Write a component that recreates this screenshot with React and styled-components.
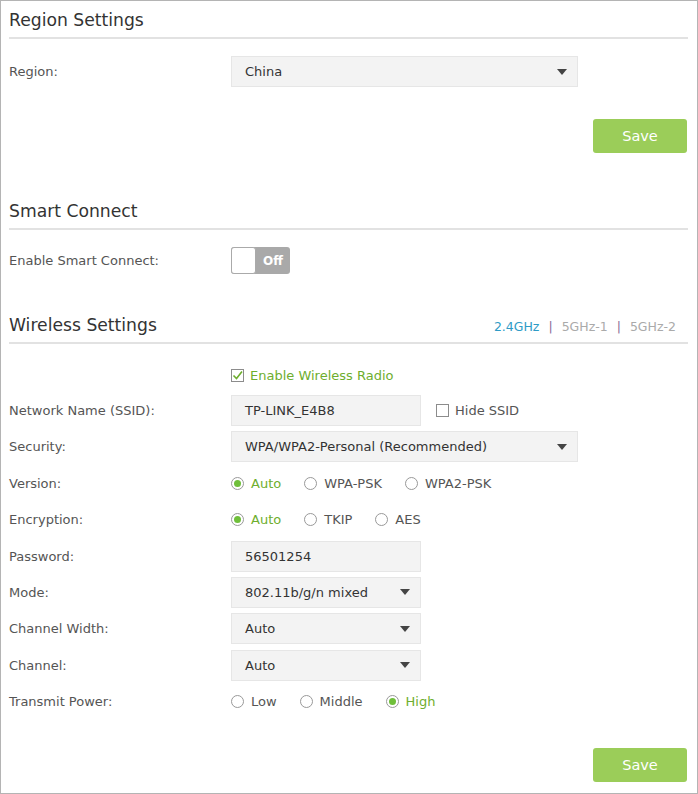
import React from 'react';
import styled, { createGlobalStyle, css } from 'styled-components';

const GlobalStyle = createGlobalStyle`
  html, body {
    margin: 0;
    padding: 0;
    background: #fff;
  }
  * {
    box-sizing: border-box;
  }
`;

const Frame = styled.div`
  width: 698px;
  height: 794px;
  border: 1px solid #b4b4b4;
  padding: 0 9px 0 8px;
  font-family: "DejaVu Sans", Verdana, sans-serif;
  font-size: 13px;
  color: #555;
  overflow: hidden;
`;

const Header = styled.div`
  display: flex;
  justify-content: space-between;
  align-items: center;
  height: 38px;
  padding-top: 2px;
  border-bottom: 2px solid #e2e2e2;
  margin-top: ${({ top }) => top || 0}px;
`;

const Title = styled.h2`
  margin: 0;
  font-size: 17.2px;
  font-weight: normal;
  color: #333;
  line-height: 34px;
`;

const Tabs = styled.div`
  display: flex;
  align-items: center;
  font-size: 12.5px;
  padding-right: 12px;
  margin-top: 2px;
`;

const Tab = styled.span`
  color: ${({ active }) => (active ? '#2e9bc6' : '#aaa')};
`;

const Sep = styled.span`
  color: #8a6a96;
  margin: 0 9px;
`;

const Row = styled.div`
  display: flex;
  align-items: center;
  height: ${({ h }) => h || 31}px;
  margin-top: ${({ top }) => (top === undefined ? 5.4 : top)}px;
`;

const Label = styled.div`
  width: 222px;
  flex-shrink: 0;
  color: #555;
`;

const fieldBox = css`
  height: 31px;
  background: #f3f3f3;
  border: 1px solid #e6e6e6;
  color: #333;
  display: flex;
  align-items: center;
  padding: 0 13px 0 13px;
`;

const Input = styled.div`
  ${fieldBox};
  width: ${({ w }) => w}px;
`;

const Select = styled.div`
  ${fieldBox};
  width: ${({ w }) => w}px;
  justify-content: space-between;
  padding-right: 10px;
`;

const Arrow = styled.span`
  width: 0;
  height: 0;
  border-left: 5px solid transparent;
  border-right: 5px solid transparent;
  border-top: 6px solid #444;
`;

const Actions = styled.div`
  display: flex;
  justify-content: flex-end;
  margin-top: ${({ top }) => top}px;
`;

const SaveButton = styled.button`
  width: 94px;
  height: 34px;
  border: none;
  border-radius: 3px;
  background: #9bcd59;
  color: #fff;
  font-family: "DejaVu Sans", Verdana, sans-serif;
  font-size: 14.5px;
  margin-right: 1px;
`;

const Toggle = styled.div`
  width: 59px;
  height: 27px;
  border-radius: 3px;
  background: #a9a9a9;
  display: flex;
  align-items: center;
`;

const Knob = styled.span`
  width: 25px;
  height: 27px;
  background: #fff;
  border: 1px solid #aaa;
  border-radius: 3px;
`;

const ToggleText = styled.span`
  flex: 1;
  text-align: center;
  color: #fff;
  font-weight: bold;
  font-size: 12px;
`;

const CheckItem = styled.label`
  display: flex;
  align-items: center;
  color: ${({ green }) => (green ? '#6eae2e' : '#555')};
  margin-left: ${({ left }) => left || 0}px;
`;

const Box = styled.span`
  width: 13px;
  height: 13px;
  border: 1px solid #8c8c8c;
  background: #fff;
  margin-right: 6px;
  display: flex;
  align-items: center;
  justify-content: center;
`;

const RadioItem = styled.label`
  display: flex;
  align-items: center;
  margin-right: 23px;
  color: ${({ checked }) => (checked ? '#6eae2e' : '#555')};
`;

const Circle = styled.span`
  width: 13px;
  height: 13px;
  border-radius: 50%;
  border: 1px solid #999;
  background: #fff;
  margin-right: 7px;
  display: flex;
  align-items: center;
  justify-content: center;
`;

const Dot = styled.span`
  width: 7px;
  height: 7px;
  border-radius: 50%;
  background: #6fbf3a;
`;

const Check = () => (
  <svg width="11" height="11" viewBox="0 0 11 11">
    <path d="M1.5 5.5 L4.5 8.5 L10 1.5" fill="none" stroke="#6eae2e" strokeWidth="1.6" />
  </svg>
);

const Radios = ({ items, value }) => (
  <>
    {items.map((item) => (
      <RadioItem key={item} checked={item === value}>
        <Circle>{item === value && <Dot />}</Circle>
        {item}
      </RadioItem>
    ))}
  </>
);

const App = () => {
  return (
    <Frame>
      <GlobalStyle />

      <Header>
        <Title>Region Settings</Title>
      </Header>
      <Row top={17}>
        <Label>Region:</Label>
        <Select w={347}>
          China
          <Arrow />
        </Select>
      </Row>
      <Actions top={32}>
        <SaveButton>Save</SaveButton>
      </Actions>

      <Header top={39}>
        <Title>Smart Connect</Title>
      </Header>
      <Row top={17} h={27}>
        <Label>Enable Smart Connect:</Label>
        <Toggle>
          <Knob />
          <ToggleText>Off</ToggleText>
        </Toggle>
      </Row>

      <Header top={32}>
        <Title>Wireless Settings</Title>
        <Tabs>
          <Tab active>2.4GHz</Tab>
          <Sep>|</Sep>
          <Tab>5GHz-1</Tab>
          <Sep>|</Sep>
          <Tab>5GHz-2</Tab>
        </Tabs>
      </Header>
      <Row top={21} h={20}>
        <Label />
        <CheckItem green>
          <Box>
            <Check />
          </Box>
          Enable Wireless Radio
        </CheckItem>
      </Row>
      <Row top={10}>
        <Label>Network Name (SSID):</Label>
        <Input w={190}>TP-LINK_E4B8</Input>
        <CheckItem left={15}>
          <Box />
          Hide SSID
        </CheckItem>
      </Row>
      <Row>
        <Label>Security:</Label>
        <Select w={347}>
          WPA/WPA2-Personal (Recommended)
          <Arrow />
        </Select>
      </Row>
      <Row>
        <Label>Version:</Label>
        <Radios items={['Auto', 'WPA-PSK', 'WPA2-PSK']} value="Auto" />
      </Row>
      <Row>
        <Label>Encryption:</Label>
        <Radios items={['Auto', 'TKIP', 'AES']} value="Auto" />
      </Row>
      <Row>
        <Label>Password:</Label>
        <Input w={190}>56501254</Input>
      </Row>
      <Row>
        <Label>Mode:</Label>
        <Select w={190}>
          802.11b/g/n mixed
          <Arrow />
        </Select>
      </Row>
      <Row>
        <Label>Channel Width:</Label>
        <Select w={190}>
          Auto
          <Arrow />
        </Select>
      </Row>
      <Row>
        <Label>Channel:</Label>
        <Select w={190}>
          Auto
          <Arrow />
        </Select>
      </Row>
      <Row>
        <Label>Transmit Power:</Label>
        <Radios items={['Low', 'Middle', 'High']} value="High" />
      </Row>
      <Actions top={31}>
        <SaveButton>Save</SaveButton>
      </Actions>
    </Frame>
  );
};

export default App;
